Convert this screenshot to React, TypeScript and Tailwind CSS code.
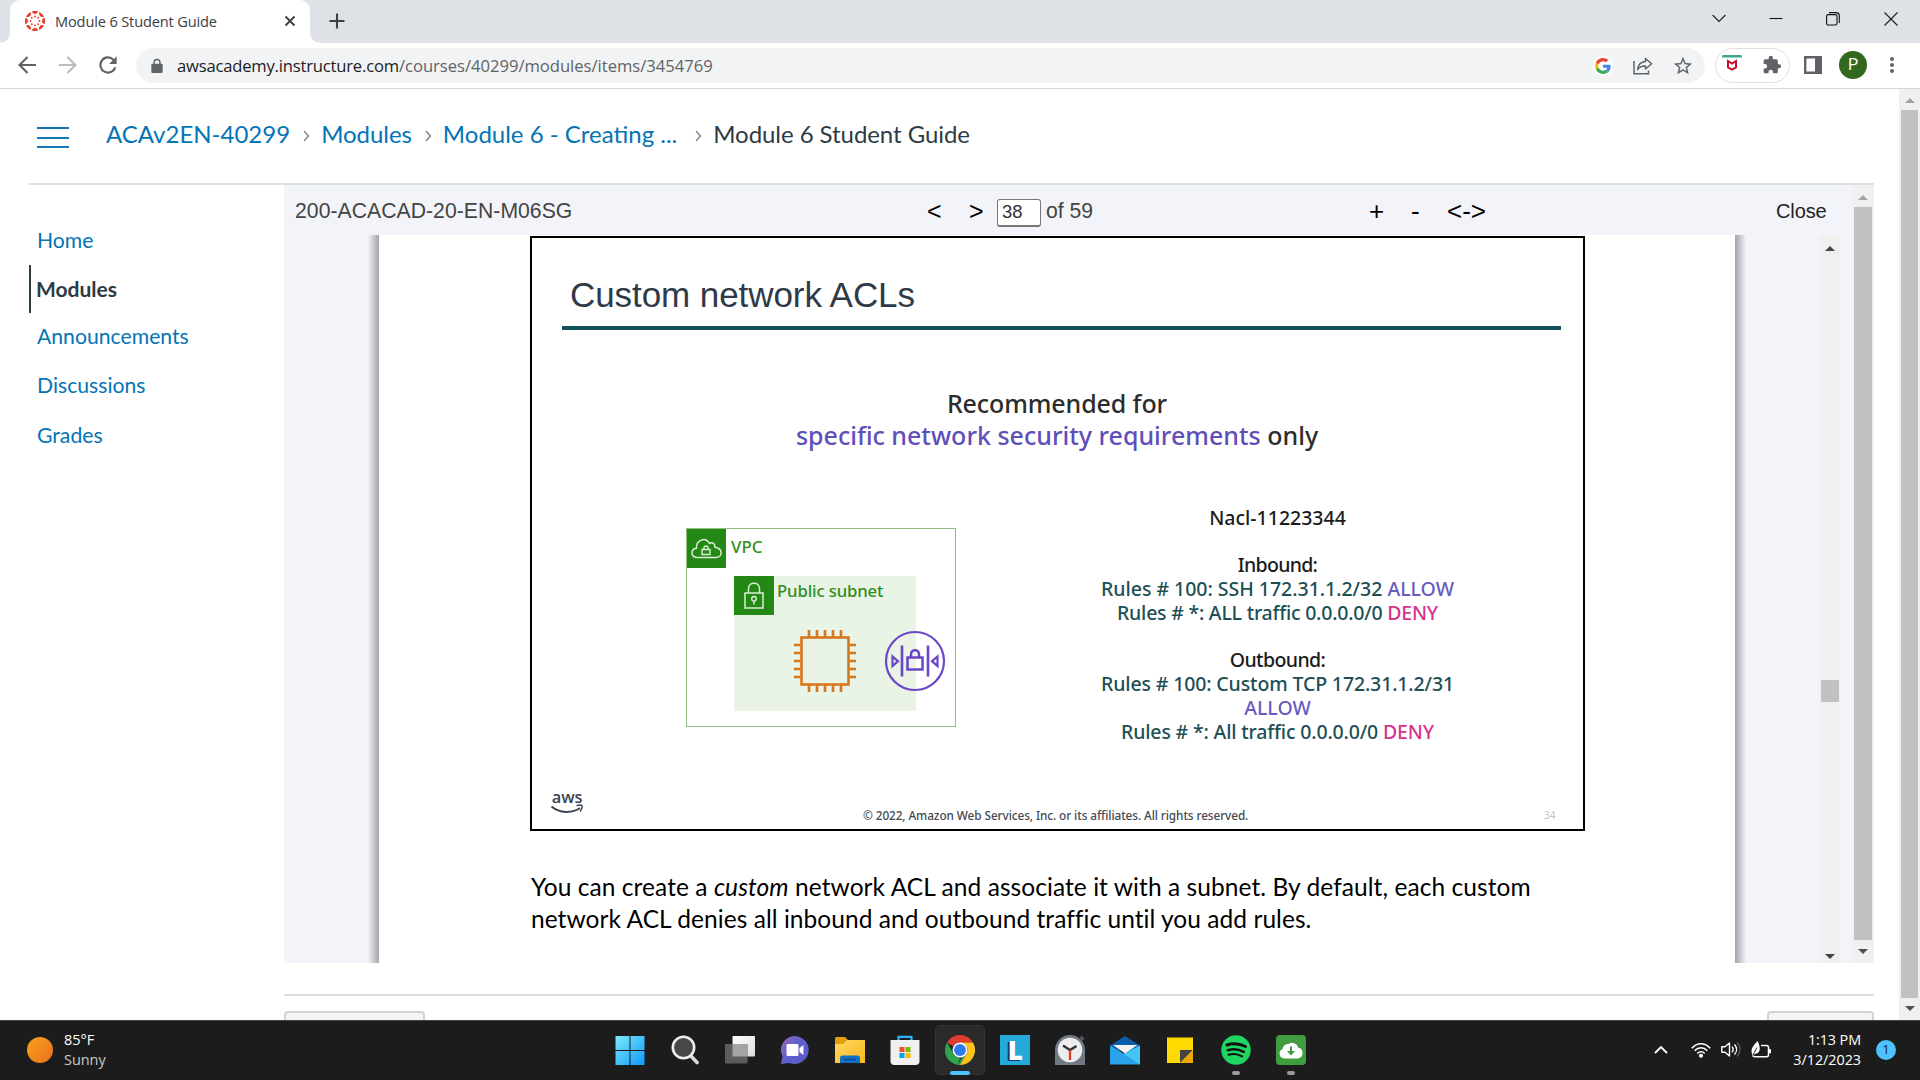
import React from "react";

const UI = "font-['Open_Sans',sans-serif]";
const EMBER = "font-['Noto_Sans',sans-serif]";
const LATO = "font-['Lato',sans-serif]";
const ARIAL = "font-['Liberation_Sans',sans-serif]";

function CanvasFavicon() {
  const spokes = [0, 45, 90, 135, 180, 225, 270, 315];
  return (
    <svg width="20" height="20" viewBox="0 0 20 20" className="shrink-0">
      {spokes.map((a) => (
        <g key={a} transform={`rotate(${a} 10 10)`} fill="#e8392b">
          <path d="M6.800 .5A10 10 0 0 1 13.200 .5A3.300 3.300 0 0 1 6.800 .5Z" />
          <circle cx="10" cy="5.500" r=".9" />
        </g>
      ))}
    </svg>
  );
}

function TabStrip() {
  return (
    <div className="flex h-[43px] items-start bg-[#dee1e6]">
      <svg width="10" height="43" className="shrink-0">
        <path d="M10 33V43H0A10 10 0 0 0 10 33Z" fill="#fff" />
      </svg>
      <div className="flex h-[43px] w-[300px] items-center rounded-t-[10px] bg-white pb-[2px] pl-[15px] pr-[13px]">
        <CanvasFavicon />
        <span className={`ml-[10px] flex-1 whitespace-nowrap text-[14.6px] leading-5 tracking-[-0.15px] text-[#3c4043] ${UI}`}>
          Module 6 Student Guide
        </span>
        <svg width="14" height="14" viewBox="0 0 14 14" stroke="#3c4043" strokeWidth="1.9">
          <path d="M2.5 2.5L11.5 11.5M11.5 2.5L2.5 11.5" />
        </svg>
      </div>
      <svg width="10" height="43" className="shrink-0">
        <path d="M0 33V43H10A10 10 0 0 1 0 33Z" fill="#fff" />
      </svg>
      <svg width="18" height="18" viewBox="0 0 18 18" className="ml-[8px] mt-[12px]" stroke="#3c4043" strokeWidth="2.1">
        <path d="M9 1.5V16.5M1.5 9H16.5" />
      </svg>
      <div className="flex-1" />
      <svg width="14" height="10" viewBox="0 0 14 10" className="mr-[43px] mt-[13px]" fill="none" stroke="#222" strokeWidth="1.2">
        <path d="M.6 2L7 8.5L13.4 2" />
      </svg>
      <svg width="14" height="14" viewBox="0 0 14 14" className="mr-[43px] mt-[11px]" stroke="#111" strokeWidth="1.1">
        <path d="M.5 7.5H13.5" />
      </svg>
      <svg width="14" height="14" viewBox="0 0 14 14" className="mr-[44px] mt-[12px]" fill="none" stroke="#111" strokeWidth="1.1">
        <rect x=".6" y="2.6" width="10.4" height="10.4" rx="1.6" />
        <path d="M3 .6H10.4A3 3 0 0 1 13.3 3.5V11" />
      </svg>
      <svg width="14" height="14" viewBox="0 0 14 14" className="mr-[22px] mt-[12px]" stroke="#222" strokeWidth="1.2">
        <path d="M.5 .5L13.5 13.5M13.5 .5L.5 13.5" />
      </svg>
    </div>
  );
}

function AddressBar() {
  return (
    <div className="flex h-[46px] items-center border-b border-[#d5d6d8] bg-white pb-px pl-[15px] pr-[20px]">
      <svg width="24" height="24" viewBox="0 0 24 24" fill="#5f6368" className="shrink-0">
        <path d="M21 11H7l6.3-6.3L11.8 3.2 3 12l8.8 8.8 1.5-1.5L7 13H21z" />
      </svg>
      <svg width="24" height="24" viewBox="0 0 24 24" fill="#babcbe" className="ml-[17px] shrink-0">
        <path d="M3 11H17l-6.3-6.3 1.5-1.5L21 12l-8.8 8.8-1.5-1.5L17 13H3z" />
      </svg>
      <svg width="26" height="26" viewBox="0 0 24 24" fill="#5f6368" className="ml-[15px] shrink-0">
        <path d="M17.65 6.35A8 8 0 1 0 19.73 14h-2.08A6 6 0 1 1 12 6c1.66 0 3.14.69 4.22 1.78L13 11h7V4z" />
      </svg>
      <div className="ml-[15px] mt-px flex h-[35px] w-[1569px] shrink-0 items-center rounded-full bg-[#f1f3f4] pl-[14px] pr-[11px]">
        <svg width="14" height="16" viewBox="0 0 16 18" fill="#5f6368">
          <path d="M13 6.5h-.8V5a4.2 4.2 0 0 0-8.4 0v1.500H3A1.500 1.500 0 0 0 1.500 8v7.500A1.500 1.500 0 0 0 3 17h10a1.500 1.500 0 0 0 1.500-1.500V8A1.500 1.500 0 0 0 13 6.500zM5.400 5a2.600 2.600 0 0 1 5.200 0v1.500H5.400z" />
        </svg>
        <div className={`ml-[13px] flex-1 whitespace-nowrap text-[16.6px] leading-6 text-[#5f6368] ${UI}`}>
          <span className="tracking-[-0.19px] text-[#202124]">awsacademy.instructure.com</span>
          <span className="tracking-[-0.01px]">/courses/40299/modules/items/3454769</span>
        </div>
        <div className="flex size-[20px] items-center justify-center rounded-full bg-white">
          <svg width="16" height="16" viewBox="0 0 48 48">
            <path fill="#EA4335" d="M24 9.500c3.540 0 6.710 1.220 9.210 3.600l6.850-6.850C35.900 2.380 30.470 0 24 0 14.620 0 6.510 5.380 2.560 13.220l7.980 6.190C12.430 13.720 17.740 9.500 24 9.500z" />
            <path fill="#4285F4" d="M46.980 24.550c0-1.570-.15-3.090-.38-4.550H24v9.020h12.940c-.58 2.960-2.260 5.480-4.780 7.180l7.730 6c4.510-4.180 7.090-10.360 7.090-17.650z" />
            <path fill="#FBBC05" d="M10.530 28.590c-.48-1.450-.76-2.990-.76-4.590s.27-3.140.76-4.590l-7.980-6.190C.92 16.460 0 20.120 0 24c0 3.880.92 7.540 2.560 10.780l7.970-6.190z" />
            <path fill="#34A853" d="M24 48c6.480 0 11.930-2.130 15.890-5.810l-7.730-6c-2.150 1.450-4.920 2.300-8.160 2.300-6.260 0-11.570-4.220-13.470-9.910l-7.980 6.190C6.510 42.620 14.620 48 24 48z" />
          </svg>
        </div>
        <svg width="20" height="18" viewBox="0 0 20 18" className="ml-[20px]" fill="none" stroke="#5f6368" strokeWidth="1.500">
          <path d="M1 4V16.800H15.500V13.500" />
          <path d="M12.500 1.500L18.600 6.800L12.500 12V9C8.500 9 6.200 10 4.600 12.600C5 8.600 7.500 5 12.500 4.600Z" strokeLinejoin="round" />
        </svg>
        <svg width="22" height="22" viewBox="0 0 24 24" className="ml-[19px]" fill="#5f6368">
          <path d="M22 9.240l-7.190-.62L12 2 9.190 8.630 2 9.240l5.460 4.730L5.820 21 12 17.270 18.180 21l-1.630-7.030L22 9.240zM12 15.400l-3.760 2.270 1-4.280-3.320-2.880 4.380-.38L12 6.100l1.710 4.040 4.380.38-3.320 2.880 1 4.280L12 15.400z" />
        </svg>
      </div>
      <div className="ml-[10px] mt-px flex h-[35px] w-[75px] shrink-0 items-center rounded-full border border-[#dfe0e2] pl-[6px]">
        <svg width="20" height="18" viewBox="0 0 20 18" className="-mt-[5px]">
          <rect x="0" y="1" width="20" height="2.600" rx="1.200" fill="#3fa78f" />
          <path d="M6 7V13.500L10 15.700L14 13.500V7L10 9.600Z" fill="none" stroke="#c8102e" strokeWidth="2" strokeLinejoin="miter" />
        </svg>
        <svg width="20" height="20" viewBox="0 0 24 24" className="-mt-px ml-[20px]" fill="#5f6368">
          <path d="M20.500 11H19V7c0-1.100-.9-2-2-2h-4V3.500a2.500 2.500 0 0 0-5 0V5H4c-1.100 0-2 .9-2 2v3.800h1.500a2.700 2.700 0 0 1 0 5.400H2V20c0 1.100.9 2 2 2h3.800v-1.500a2.700 2.700 0 0 1 5.400 0V22H17c1.100 0 2-.9 2-2v-4h1.500a2.500 2.500 0 0 0 0-5z" />
        </svg>
      </div>
      <svg width="18" height="18" viewBox="0 0 18 18" className="ml-[14px] shrink-0">
        <path d="M0 0H18V18H0ZM2.400 2.400V15.600H11V2.400Z" fill="#5f6368" fillRule="evenodd" />
      </svg>
      <div className="ml-[17px] flex size-[28px] shrink-0 items-center justify-center rounded-full bg-[#33691e] font-['Roboto',sans-serif] text-[16px] text-white">P</div>
      <svg width="6" height="18" viewBox="0 0 6 18" className="ml-[22px] shrink-0" fill="#5f6368">
        <circle cx="3" cy="3" r="2" />
        <circle cx="3" cy="9" r="2" />
        <circle cx="3" cy="15" r="2" />
      </svg>
    </div>
  );
}

function Arrow({ down, color }: { down?: boolean; color: string }) {
  return (
    <svg width="10" height="5" viewBox="0 0 10 5" className="shrink-0" fill={color}>
      {down ? <path d="M0 0H10L5 5Z" /> : <path d="M0 5H10L5 0Z" />}
    </svg>
  );
}

const crumbSep = (
  <svg width="7" height="12" viewBox="0 0 7 12" fill="none" stroke="#6f7a83" strokeWidth="1.200" className="mt-[5px] shrink-0">
    <path d="M1 1L5.500 6L1 11" />
  </svg>
);

function Breadcrumbs() {
  return (
    <header className="ml-[29px] mr-[25px] flex h-[96px] shrink-0 items-center border-b-2 border-[#d9dfe3] pb-[5px] pl-[8px]">
      <div className="mt-[8px] flex w-[32px] flex-col gap-[7.500px]">
        <div className="h-[2px] bg-[#1577b5]" />
        <div className="h-[2px] bg-[#1577b5]" />
        <div className="h-[2px] bg-[#1577b5]" />
      </div>
      <nav className={`ml-[37px] flex items-center whitespace-nowrap text-[24px] leading-[30px] text-[#0374b5] ${LATO}`}>
        <span className="mr-[13px]">ACAv2EN-40299</span>
        {crumbSep}
        <span className="ml-[11px] mr-[13px] tracking-[-0.05px]">Modules</span>
        {crumbSep}
        <span className="ml-[11px] mr-[18px]">Module 6 - Creating ...</span>
        {crumbSep}
        <span className="ml-[11px] tracking-[-0.06px] text-[#2d3b45]">Module 6 Student Guide</span>
      </nav>
    </header>
  );
}

function CourseNav() {
  return (
    <nav className={`ml-[29px] flex w-[255px] shrink-0 flex-col pt-[31px] text-[21.200px] leading-[48.700px] text-[#0374b5] ${LATO}`}>
      <a className="border-l-2 border-transparent pl-[6px]">Home</a>
      <a className="border-l-2 border-[#2d3b45] pl-[5px] text-[21px] font-bold text-[#2d3b45]">Modules</a>
      <a className="-mt-px border-l-2 border-transparent pl-[6px]">Announcements</a>
      <a className="border-l-2 border-transparent pl-[6px]">Discussions</a>
      <a className="mt-px border-l-2 border-transparent pl-[6px]">Grades</a>
    </nav>
  );
}

function PdfToolbar() {
  return (
    <div className={`flex h-[50px] shrink-0 items-center whitespace-nowrap pl-[11px] text-[21.200px] text-[#444] ${ARIAL}`}>
      <span className="mt-px w-[632px] tracking-[0.030px]">200-ACACAD-20-EN-M06SG</span>
      <span className="mt-px w-[42px] text-[25px] leading-6 text-black">&lt;</span>
      <span className="mt-px w-[28px] text-[25px] leading-6 text-black">&gt;</span>
      <span className="mt-[5px] flex h-[28px] w-[44px] items-center rounded-[3px] border border-b-2 border-[#777] bg-white pl-[4px] text-[18.500px] text-[#333]">38</span>
      <span className="ml-[5px] mt-px w-[323px]">of 59</span>
      <span className="mt-px w-[42px] text-[26px] leading-6 text-black">+</span>
      <span className="mt-px w-[36px] text-[26px] leading-6 text-black">-</span>
      <span className="mt-px w-[329px] text-[26px] leading-6 text-black">&lt;-&gt;</span>
      <span className="mt-[2px] text-[20px] tracking-[-0.100px] text-[#222]">Close</span>
    </div>
  );
}

function Diagram() {
  const pins = [0, 1, 2, 3, 4];
  return (
    <div className={`relative mt-[77px] h-[199px] w-[270px] shrink-0 border-[1.500px] border-[#8fbf80] text-[#2f8f1d] ${EMBER}`}>
      <div className="flex">
        <svg width="39" height="39" viewBox="0 0 39 39" className="shrink-0">
          <rect width="39" height="39" fill="#248814" />
          <path d="M10.500 28.500C3.500 28.500 3.200 20 9.500 19.200C9 11.500 18 7 22.500 14.500C25 12.500 28 14.500 28 18.200C36.500 19.500 35.500 28.500 29 28.500Z" fill="none" stroke="#d9efd5" strokeWidth="1.500" />
          <path d="M15 20.500H23V25.500H15ZM16.700 20.500C16.700 15.800 21.300 15.800 21.300 20.500" fill="none" stroke="#d9efd5" strokeWidth="1.400" />
        </svg>
        <span className="ml-[5px] mt-[6px] text-[16.900px] font-medium leading-6">VPC</span>
      </div>
      <div className="absolute left-[47px] top-[47px] flex h-[135px] w-[182px] bg-[#e9f3e6]">
        <svg width="40" height="39" viewBox="0 0 40 39" className="shrink-0">
          <rect width="40" height="39" fill="#248814" />
          <path d="M11 17H29V32H11ZM14.500 17V12.500C14.500 5.500 25.500 5.500 25.500 12.500V17" fill="none" stroke="#d9efd5" strokeWidth="1.500" />
          <circle cx="20" cy="22.800" r="2.300" fill="none" stroke="#d9efd5" strokeWidth="1.400" />
          <path d="M20 25V28.500" stroke="#d9efd5" strokeWidth="1.500" />
        </svg>
        <span className="ml-[3px] mt-[3px] whitespace-nowrap text-[16.700px] font-medium leading-6 tracking-[-0.120px]">Public subnet</span>
      </div>
      <svg width="62" height="62" viewBox="0 0 62 62" className="absolute left-[107px] top-[101px]" fill="none" stroke="#d9771f" strokeWidth="2.600">
        <rect x="7.500" y="7.500" width="47" height="47" />
        {pins.map((i) => (
          <path key={i} d={`M${15 + i * 8} 0V7M${15 + i * 8} 55V62M0 ${15 + i * 8}H7M55 ${15 + i * 8}H62`} />
        ))}
      </svg>
      <svg width="62" height="62" viewBox="0 0 62 62" className="absolute left-[197px] top-[101px]" fill="none" stroke="#6a46c6" strokeWidth="2.200">
        <circle cx="31" cy="31" r="29" />
        <path d="M18 15.500V46.500M44 15.500V46.500" strokeWidth="2.600" />
        <path d="M23.500 27.500H38.500V39.500H23.500Z" strokeWidth="2.500" />
        <path d="M27 27.500V24.500C27 18.700 35 18.700 35 24.500V27.500" strokeWidth="2.500" />
        <path d="M8.500 26.500V36L14 31.200ZM53.500 26.500V36L48 31.200Z" />
      </svg>
    </div>
  );
}

function Rules() {
  return (
    <div className={`ml-[121.500px] mt-[54.500px] w-[400px] whitespace-nowrap text-center text-[19.500px] font-medium leading-[23.800px] text-[#1d4f55] ${EMBER}`}>
      <p className="text-[#1b1b1b]">Nacl-11223344</p>
      <p>&nbsp;</p>
      <p className="tracking-[-0.700px] text-[#1b1b1b]">Inbound:</p>
      <p className="tracking-[-0.020px]">Rules # 100: SSH 172.31.1.2/32 <span className="text-[#6a5bc0]">ALLOW</span></p>
      <p className="tracking-[-0.220px]">Rules # *: ALL traffic 0.0.0.0/0 <span className="text-[#d6338f]">DENY</span></p>
      <p>&nbsp;</p>
      <p className="tracking-[-0.600px] text-[#1b1b1b]">Outbound:</p>
      <p className="tracking-[-0.130px]">Rules # 100: Custom TCP 172.31.1.2/31</p>
      <p className="text-[#6a5bc0]">ALLOW</p>
      <p className="tracking-[-0.160px]">Rules # *: All traffic 0.0.0.0/0 <span className="text-[#d6338f]">DENY</span></p>
    </div>
  );
}

function Slide() {
  return (
    <section className="ml-[151px] mt-px flex h-[595px] w-[1055px] flex-col border-2 border-black bg-white">
      <h1 className={`ml-[38px] mt-[37px] whitespace-nowrap text-[35px] leading-[40px] tracking-[-0.070px] text-[#2f3a48] ${ARIAL}`}>Custom network ACLs</h1>
      <div className="ml-[30px] mt-[10.500px] h-[4px] w-[999px] shrink-0 bg-[#125159]" />
      <div className={`mt-[57.500px] pr-px text-center text-[25px] font-medium leading-[32px] text-[#2c2c2c] ${EMBER}`}>
        <p className="tracking-[-0.100px]">Recommended for</p>
        <p><span className="text-[#5f4fb8]">specific network security requirements</span> only</p>
      </div>
      <div className="ml-[154px] flex flex-1">
        <Diagram />
        <Rules />
      </div>
      <div className="flex h-[37px] shrink-0 items-start pl-[18px]">
        <div className="w-[34px]">
          <p className="-mt-[2px] text-center font-['Open_Sans',sans-serif] text-[16.500px] font-semibold leading-[14px] tracking-[-0.200px] text-[#3b4454]">aws</p>
          <svg width="34" height="11" viewBox="0 0 34 11" fill="none" stroke="#3b4454">
            <path d="M1.500 2.500C10 9.500 22 9.500 30 4" strokeWidth="2" />
            <path d="M26.500 1.500C29 .8 31 .8 31.800 1.600C32.500 2.500 31.500 5.500 30 7.500" strokeWidth="1.500" />
          </svg>
        </div>
        <p className={`ml-[279px] mt-[15px] w-[681px] whitespace-nowrap text-[11.800px] font-medium leading-4 tracking-[-0.085px] text-[#444a52] ${EMBER}`}>
          © 2022, Amazon Web Services, Inc. or its affiliates. All rights reserved.
        </p>
        <p className={`mt-[15px] text-[10px] leading-4 text-[#c4c4c4] ${EMBER}`}>34</p>
      </div>
    </section>
  );
}

function PdfPage() {
  return (
    <div className="flex min-h-0 flex-1">
      <div className="w-[84px]" />
      <div className="w-[11px] bg-linear-to-r from-[#f3f4f9] to-[#a3a4a9]" />
      <div className="w-[1356px] overflow-hidden bg-white">
        <Slide />
        <p className={`ml-[152px] mt-[40px] whitespace-nowrap text-[24.500px] leading-[32px] text-black ${LATO}`}>
          <span className="tracking-[0.070px]">You can create a <i>custom</i> network ACL and associate it with a subnet. By default, each custom</span>
          <br />
          <span className="tracking-[0.050px]">network ACL denies all inbound and outbound traffic until you add rules.</span>
        </p>
      </div>
      <div className="w-[11px] bg-linear-to-r from-[#a3a4a9] to-[#f3f4f9]" />
      <div className="w-[73px]" />
      <div className="flex w-[21px] flex-col items-center bg-[#f0f0f0] pb-[4px] pt-[11px]">
        <Arrow color="#444" />
        <div className="mt-[429px] h-[22px] w-[18px] bg-[#c1c1c1]" />
        <div className="flex-1" />
        <Arrow down color="#444" />
      </div>
    </div>
  );
}

function Viewer() {
  return (
    <main className="flex w-[1590px] flex-col">
      <div className="flex h-[778px] bg-[#f3f4f9]">
        <div className="flex w-[1568px] flex-col">
          <PdfToolbar />
          <PdfPage />
        </div>
        <div className="flex w-[22px] flex-col items-center bg-[#f0f0f0] pb-[9px] pt-[10px]">
          <Arrow color="#a3a3a3" />
          <div className="mt-[7px] w-[18px] flex-1 bg-[#c1c1c1]" />
          <div className="h-[9px]" />
          <Arrow down color="#505050" />
        </div>
      </div>
      <div className="mt-[31px] flex justify-between border-t-2 border-[#dcdddf] pt-[15px]">
        <div className="h-[30px] w-[141px] rounded-[4px] border-2 border-[#cfd4d7] bg-[#f5f5f5]" />
        <div className="h-[30px] w-[107px] rounded-[4px] border-2 border-[#cfd4d7] bg-[#f5f5f5]" />
      </div>
    </main>
  );
}

const slot = "flex h-[50px] w-[55.100px] items-center justify-center";

function TaskbarIcons() {
  return (
    <div className="flex items-center">
      <div className={slot}>
        <svg width="30" height="30" viewBox="0 0 30 30">
          <defs>
            <linearGradient id="win" x1="0" y1="0" x2="1" y2="1">
              <stop offset="0" stopColor="#7beafd" />
              <stop offset="1" stopColor="#0f98f8" />
            </linearGradient>
          </defs>
          <path d="M.5 1H14.500V15H.5ZM15.500 1H29.500V15H15.500ZM.5 16H14.500V30H.5ZM15.500 16H29.500V30H15.500Z" fill="url(#win)" />
        </svg>
      </div>
      <div className={slot}>
        <svg width="30" height="30" viewBox="0 0 30 30">
          <path d="M19.500 19.500L27 27.500" stroke="#d8dadc" strokeWidth="3.600" strokeLinecap="round" />
          <circle cx="13.500" cy="12.500" r="10.700" fill="#454748" stroke="#eceeef" strokeWidth="2.600" />
        </svg>
      </div>
      <div className={slot}>
        <svg width="30" height="30" viewBox="0 0 30 30">
          <defs>
            <linearGradient id="tv" x1="0" y1="0" x2="1" y2="1">
              <stop offset="0" stopColor="#fff" />
              <stop offset="1" stopColor="#dcdcdc" />
            </linearGradient>
          </defs>
          <rect x="7.500" y="1" width="22.500" height="20.500" rx="1" fill="url(#tv)" />
          <rect x="0" y="9" width="22.500" height="19.500" rx="1" fill="#5c5c5c" />
          <path d="M7.500 9H22.500V21.500H7.500Z" fill="#a3a3a3" />
        </svg>
      </div>
      <div className={slot}>
        <svg width="30" height="30" viewBox="0 0 30 30">
          <defs>
            <linearGradient id="chat" x1="0" y1="0" x2="1" y2=".7">
              <stop offset="0" stopColor="#a06bb0" />
              <stop offset=".5" stopColor="#5f5fcf" />
              <stop offset="1" stopColor="#5a5ac8" />
            </linearGradient>
          </defs>
          <path d="M15 1A14 14 0 1 1 9.500 28L.8 29L2.500 21.500A14 14 0 0 1 15 1Z" fill="url(#chat)" />
          <rect x="6.500" y="9" width="12" height="12" rx="1.500" fill="#fff" />
          <path d="M19.500 13L23.500 10V20L19.500 17Z" fill="#fff" />
        </svg>
      </div>
      <div className={slot}>
        <svg width="30" height="30" viewBox="0 0 30 30">
          <defs>
            <linearGradient id="fold" x1="0" y1="0" x2="1" y2="1">
              <stop offset="0" stopColor="#ffd862" />
              <stop offset="1" stopColor="#f8b71d" />
            </linearGradient>
          </defs>
          <path d="M0 3.500Q0 2 1.500 2H10L13 5V12H0Z" fill="#df9f0c" />
          <path d="M0 9H8L12 5H30V28H0Z" fill="url(#fold)" />
          <path d="M5 28V23Q5 20.500 7.500 20.500H22.500Q25 20.500 25 23V28Z" fill="#0e70c4" />
          <path d="M9 24.500H21" stroke="#0a4a8a" strokeWidth="1.500" />
        </svg>
      </div>
      <div className={slot}>
        <svg width="30" height="30" viewBox="0 0 30 30">
          <path d="M8.500 7V1.800H21.500V7" fill="none" stroke="#2cb4ee" strokeWidth="2.200" />
          <path d="M.5 5H29.500V26Q29.500 30 25.500 30H4.500Q.5 30 .5 26Z" fill="#f0f0f0" />
          <path d="M9.500 12H14.500V17H9.500Z" fill="#f25022" />
          <path d="M15.500 12H20.500V17H15.500Z" fill="#7fba00" />
          <path d="M9.500 18H14.500V23H9.500Z" fill="#00a4ef" />
          <path d="M15.500 18H20.500V23H15.500Z" fill="#ffb900" />
        </svg>
      </div>
      <div className={slot}>
        <div className="relative flex size-[50px] items-center justify-center rounded-[5px] border border-[#333] bg-[#2a2a2a]">
          <svg width="30" height="30" viewBox="0 0 48 48">
            <path d="M24 0A24 24 0 0 1 44.800 12H24A12 12 0 0 0 13.600 18L3.200 12A24 24 0 0 1 24 0Z" fill="#e33b2e" />
            <path d="M3.200 12L13.600 30A12 12 0 0 0 24 36L21 48A24 24 0 0 1 3.200 12Z" fill="#2da44e" />
            <path d="M24 36L34.400 30L24 48L20.600 47.800L27 35.500Z" fill="#2da44e" />
            <path d="M24 12H44.800A24 24 0 0 1 24 48L34.400 30A12 12 0 0 0 34.400 18Z" fill="#fcc31c" />
            <circle cx="24" cy="24" r="12" fill="#fff" />
            <circle cx="24" cy="24" r="9.500" fill="#2f7bed" />
          </svg>
          <div className="absolute -bottom-px left-[14px] h-[4px] w-[20px] rounded-full bg-[#4cc2ff]" />
        </div>
      </div>
      <div className={slot}>
        <div className="flex size-[30px] items-center justify-center bg-[#25a9d8] font-['Open_Sans',sans-serif] text-[26px] font-extrabold leading-none text-white [text-shadow:-2px_1px_0_#123c7a]">L</div>
      </div>
      <div className={slot}>
        <svg width="30" height="30" viewBox="0 0 30 30">
          <path d="M0 15A15 15 0 0 1 15 0A15 15 0 0 1 30 15V30H0Z" fill="#6f7a84" />
          <path d="M24.500 3L26.500 .5L29.500 3.500L27.500 6Z" fill="#555" />
          <circle cx="15" cy="15" r="12.300" fill="#ededed" />
          <path d="M8 10.500L15 15L21.500 11" fill="none" stroke="#333" strokeWidth="2.400" />
          <path d="M15 15V25" stroke="#d83b1a" strokeWidth="2.200" />
        </svg>
      </div>
      <div className={slot}>
        <svg width="30" height="30" viewBox="0 0 30 30">
          <path d="M0 10.500L15 1L30 10.500V16H0Z" fill="#0b5cab" />
          <path d="M0 10.500L15 19.500L30 10.500V29.500H0Z" fill="#2ba3ea" />
          <path d="M30 10.500V29.500L13.500 18.800Z" fill="#43c5f5" />
          <path d="M3 10H27.500L15 18.500Z" fill="#f2f2f2" />
        </svg>
      </div>
      <div className={slot}>
        <svg width="30" height="30" viewBox="0 0 30 30">
          <path d="M2 2.500H28V28H2Z" fill="#fddb00" />
          <path d="M15 28V15H28Z" fill="#444" />
          <path d="M28 15V28H15Z" fill="#eda900" />
        </svg>
      </div>
      <div className={`${slot} relative`}>
        <svg width="30" height="30" viewBox="0 0 30 30">
          <circle cx="15" cy="15" r="14.700" fill="#1ed760" />
          <g fill="none" stroke="#111" strokeLinecap="round">
            <path d="M6 10C12 8 19 8.800 24.500 11.500" strokeWidth="3" />
            <path d="M6.800 15.200C12 13.500 18 14.200 22.800 16.800" strokeWidth="2.500" />
            <path d="M7.500 19.800C12 18.500 17 19 21 21.400" strokeWidth="2" />
          </g>
        </svg>
        <div className="absolute bottom-0 left-[24px] h-[4px] w-[8px] rounded-full bg-[#9a9a9a]" />
      </div>
      <div className={`${slot} relative`}>
        <svg width="30" height="30" viewBox="0 0 30 30">
          <rect width="30" height="30" rx="4" fill="#3f9c3f" />
          <path d="M8 23.500A5 5 0 0 1 6.500 14A5.500 5.500 0 0 1 12.500 9A6 6 0 0 1 22 12.500A5.600 5.600 0 0 1 22 23.500Z" fill="#fff" />
          <path d="M14 11.500V16H11L15 20.500L19 16H16V11.500Z" fill="#3f9c3f" />
        </svg>
        <div className="absolute bottom-0 left-[24px] h-[4px] w-[8px] rounded-full bg-[#9a9a9a]" />
      </div>
    </div>
  );
}

function Taskbar() {
  return (
    <footer className={`flex h-[60px] shrink-0 items-center whitespace-nowrap border-t border-[#434343] bg-[#1c1c1c] pb-[2px] text-white ${UI}`}>
      <div className="ml-[27px] size-[26px] rounded-full bg-linear-to-br from-[#f9a01b] to-[#e9711c]" />
      <div className="ml-[11px] w-[538px] text-[14.500px] leading-[20px] tracking-[-0.050px]">
        <p>85°F</p>
        <p className="text-[#c9c9c9]">Sunny</p>
      </div>
      <TaskbarIcons />
      <div className="flex-1" />
      <svg width="14" height="9" viewBox="0 0 14 9" fill="none" stroke="#fff" strokeWidth="1.800">
        <path d="M1 8L7 2L13 8" />
      </svg>
      <svg width="20" height="16" viewBox="0 0 20 16" className="ml-[23px]" fill="none" stroke="#fff" strokeWidth="1.500">
        <path d="M.8 6.200C6 .2 14 .2 19.200 6.200M3.600 8.800C7.300 4.800 12.700 4.800 16.400 8.800M6.300 11.400C8.400 9.200 11.600 9.200 13.700 11.400" />
        <circle cx="10" cy="13.800" r="1.300" fill="#fff" />
      </svg>
      <svg width="20" height="17" viewBox="0 0 20 17" className="ml-[10px]" fill="none" stroke="#fff" strokeWidth="1.400">
        <path d="M.8 5.800H4L8.500 2V15L4 11.200H.8Z" strokeLinejoin="round" />
        <path d="M11 5.800C12.500 7.500 12.500 9.500 11 11.200M13.500 3.500C16.200 6.500 16.200 10.500 13.500 13.500" />
        <path d="M16 1.500C20 5.500 20 11.500 16 15.500" stroke="#555" />
      </svg>
      <svg width="21" height="18" viewBox="0 0 21 18" className="ml-[10px]">
        <path d="M10 4.500H15.500Q17.500 4.500 17.500 6.500V13.800Q17.500 15.800 15.500 15.800H4Q2 15.800 1.500 14.500" fill="none" stroke="#fff" strokeWidth="1.500" />
        <path d="M18.500 8.500H19.500V12H18.500Z" fill="#fff" stroke="#fff" />
        <path d="M.5 11C.5 6 3 4 6.500 0C7.500 2 8.500 4 8.700 6.500C9 10 7.500 12.500 4.500 12.800L1.500 14.500Z" fill="#fff" />
        <path d="M2 14L6 6.500" stroke="#1c1c1c" strokeWidth=".9" />
      </svg>
      <div className="ml-[20px] w-[69px] text-right text-[14.400px] leading-[20px]">
        <p className="tracking-[-0.100px]">1:13 PM</p>
        <p className="tracking-[-0.050px]">3/12/2023</p>
      </div>
      <div className="ml-[15px] mr-[24px] flex size-[20px] items-center justify-center rounded-full bg-[#4cc2ff] text-[13px] leading-none text-[#1c1c1c]">1</div>
    </footer>
  );
}

export default function App() {
  return (
    <div className="flex h-[1080px] w-[1920px] flex-col overflow-hidden bg-white">
      <TabStrip />
      <AddressBar />
      <div className="flex min-h-0 flex-1">
        <div className="flex w-[1899px] flex-col overflow-hidden">
          <Breadcrumbs />
          <div className="flex">
            <CourseNav />
            <Viewer />
          </div>
        </div>
        <div className="flex w-[21px] flex-col items-center bg-[#f0f0f0] pb-[9px] pt-[9px]">
          <Arrow color="#a3a3a3" />
          <div className="mt-[7px] w-[17px] flex-1 bg-[#c1c1c1]" />
          <div className="h-[8px]" />
          <Arrow down color="#505050" />
        </div>
      </div>
      <Taskbar />
    </div>
  );
}
